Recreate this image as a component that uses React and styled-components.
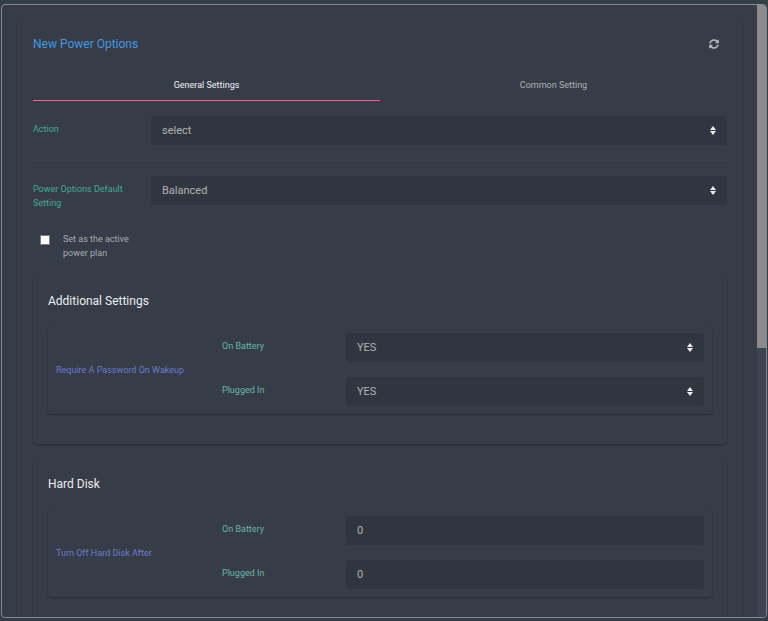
import React, { useId, useState } from "react";
import styled, { createGlobalStyle } from "styled-components";

const GlobalStyle = createGlobalStyle`
  *, *::before, *::after { box-sizing: border-box; }
  body {
    margin: 0;
    background: #343e48;
    color: #a9abae;
    font-family: Roboto, "Liberation Sans", sans-serif;
    font-size: 9px;
    line-height: 14px;
  }
`;

const Page = styled.div`
  height: 100vh;
  padding: 4px 1px 3px;
`;

const Dialog = styled.main`
  display: flex;
  height: 100%;
  border: 1px solid #868b92;
  border-radius: 4px;
  background: #363d48;
  overflow: hidden;
`;

const DialogBody = styled.div`
  flex: 1;
  min-width: 0;
  padding: 15px;
  overflow-y: auto;
  scrollbar-width: none;
`;

const ScrollTrack = styled.div`
  flex: none;
  width: 9px;
  background: #3e4452;
`;

const ScrollThumb = styled.div`
  height: 56%;
  background: #8c8c8c;
`;

const Card = styled.section`
  padding: 14px 15px 30px 16px;
  border-radius: 4px;
  box-shadow: 0 1px 2px rgba(20, 25, 32, 0.45);
`;

const Header = styled.header`
  display: flex;
  align-items: center;
  justify-content: space-between;
  height: 20px;
  padding-right: 8px;
`;

const Title = styled.h1`
  margin: 0;
  color: #4497e0;
  font-size: 12px;
  font-weight: 400;
`;

const IconButton = styled.button`
  display: flex;
  padding: 0;
  border: 0;
  background: none;
  color: #b9babc;
  cursor: pointer;
`;

const TabList = styled.div`
  display: grid;
  grid-template-columns: 1fr 1fr;
  margin-top: 15px;
`;

const Tab = styled.button`
  height: 32px;
  padding: 0;
  border: 0;
  border-bottom: 1px solid ${(p) => (p.$active ? "#c57784" : "transparent")};
  background: none;
  color: ${(p) => (p.$active ? "#f0f1f2" : "#b0b2b5")};
  font: inherit;
  cursor: pointer;
`;

const FieldRow = styled.div`
  display: grid;
  grid-template-columns: 17fr 83fr;
  align-items: start;
  padding: 15px 0;
  border-bottom: ${(p) => (p.$divided ? "1px solid #3f424b" : "0")};
`;

const Label = styled.label`
  padding: 6px 16px 0 0;
  color: ${(p) => (p.$soft ? "#6cb5a5" : "#46a896")};
`;

const SelectWrap = styled.div`
  position: relative;
`;

const Control = styled.input`
  display: block;
  width: 100%;
  height: 29px;
  margin: 0;
  padding: 0 11px;
  border: 0;
  border-radius: 3px;
  background: #30363f;
  color: #b0b2b4;
  font: inherit;
  font-size: 11px;
  appearance: none;
`;

const Arrows = styled.svg`
  position: absolute;
  top: 10px;
  right: 11px;
  width: 6px;
  height: 9px;
  fill: #ededed;
  pointer-events: none;
`;

const CheckRow = styled.div`
  display: grid;
  grid-template-columns: 17fr 83fr;
  padding: 7px 0 17px;
`;

const CheckLabel = styled.label`
  display: flex;
  align-items: flex-start;
  gap: 13px;
  padding: 0 8px 0 7px;
`;

const Checkbox = styled.input`
  flex: none;
  width: 10px;
  height: 10px;
  margin: 3px 0 0;
  border: 1px solid #777b82;
  background: #fff;
  appearance: none;
  cursor: pointer;

  &:checked {
    box-shadow: inset 0 0 0 2px #fff;
    background: #4497e0;
  }
`;

const SettingsCard = styled(Card)`
  padding: 15px 15px 30px;

  & + & {
    margin-top: 16px;
  }
`;

const CardTitle = styled.h2`
  margin: 0 0 16px;
  color: #ecedee;
  font-size: 12px;
  font-weight: 400;
  line-height: 18px;
`;

const Group = styled.fieldset`
  display: grid;
  grid-template-columns: 166fr 482fr;
  align-items: center;
  min-width: 0;
  margin: 0;
  padding: 7px 8px 8px;
  border: 0;
  border-radius: 4px;
  box-shadow: 0 1px 2px rgba(20, 25, 32, 0.45);
`;

const GroupName = styled.span`
  color: #6c7ccb;
`;

const GroupFields = styled.div`
  display: grid;
  gap: 15px;
`;

const GroupRow = styled.div`
  display: grid;
  grid-template-columns: 124fr 358fr;
  align-items: start;
`;

function Select({ id, options }) {
  return (
    <SelectWrap>
      <Control as="select" id={id}>
        {options.map((o) => (
          <option key={o}>{o}</option>
        ))}
      </Control>
      <Arrows viewBox="0 0 6 9" aria-hidden="true">
        <path d="M3 0 6 4H0ZM0 5H6L3 9Z" />
      </Arrows>
    </SelectWrap>
  );
}

function SettingsGroup({ title, name, options, value }) {
  const base = useId();
  return (
    <SettingsCard>
      <CardTitle>{title}</CardTitle>
      <Group aria-labelledby={base}>
        <GroupName id={base}>{name}</GroupName>
        <GroupFields>
          {["On Battery", "Plugged In"].map((label) => {
            const id = base + label.replace(" ", "");
            return (
              <GroupRow key={label}>
                <Label $soft htmlFor={id}>{label}</Label>
                {options ? (
                  <Select id={id} options={options} />
                ) : (
                  <Control id={id} type="text" inputMode="numeric" defaultValue={value} />
                )}
              </GroupRow>
            );
          })}
        </GroupFields>
      </Group>
    </SettingsCard>
  );
}

export default function App() {
  const [tab, setTab] = useState("General Settings");
  return (
    <Page>
      <GlobalStyle />
      <Dialog>
        <DialogBody>
          <Card>
            <Header>
              <Title>New Power Options</Title>
              <IconButton type="button" aria-label="Refresh">
                <svg width="10" height="10" viewBox="0 0 512 512" fill="currentColor" aria-hidden="true">
                  <path d="M371 133c-32-30-72-46-116-46-78 0-146 54-164 129-2 6-7 10-12 10H22c-7 0-13-7-12-14C31 94 133 8 256 8c67 0 128 27 173 70l35-35c15-15 41-5 41 17v128c0 14-11 24-24 24H353c-22 0-32-25-17-41l35-38ZM32 296h128c21 0 32 26 17 41l-39 39c32 30 73 46 116 46 78 0 146-53 165-128 1-6 6-10 12-10h57c7 0 13 7 12 15-22 118-124 205-245 205-67 0-128-27-173-71l-34 36c-15 15-41 4-41-17V320c1-13 12-24 25-24Z" />
                </svg>
              </IconButton>
            </Header>
            <TabList role="tablist">
              {["General Settings", "Common Setting"].map((t) => (
                <Tab
                  key={t}
                  type="button"
                  role="tab"
                  aria-selected={tab === t}
                  $active={tab === t}
                  onClick={() => setTab(t)}
                >
                  {t}
                </Tab>
              ))}
            </TabList>
            <FieldRow $divided>
              <Label htmlFor="action">Action</Label>
              <Select id="action" options={["select"]} />
            </FieldRow>
            <FieldRow>
              <Label htmlFor="plan">Power Options Default Setting</Label>
              <Select id="plan" options={["Balanced"]} />
            </FieldRow>
            <CheckRow>
              <CheckLabel>
                <Checkbox type="checkbox" />
                <span>Set as the active power plan</span>
              </CheckLabel>
            </CheckRow>
            <SettingsGroup
              title="Additional Settings"
              name="Require A Password On Wakeup"
              options={["YES", "NO"]}
            />
            <SettingsGroup title="Hard Disk" name="Turn Off Hard Disk After" value="0" />
          </Card>
        </DialogBody>
        <ScrollTrack aria-hidden="true">
          <ScrollThumb />
        </ScrollTrack>
      </Dialog>
    </Page>
  );
}
